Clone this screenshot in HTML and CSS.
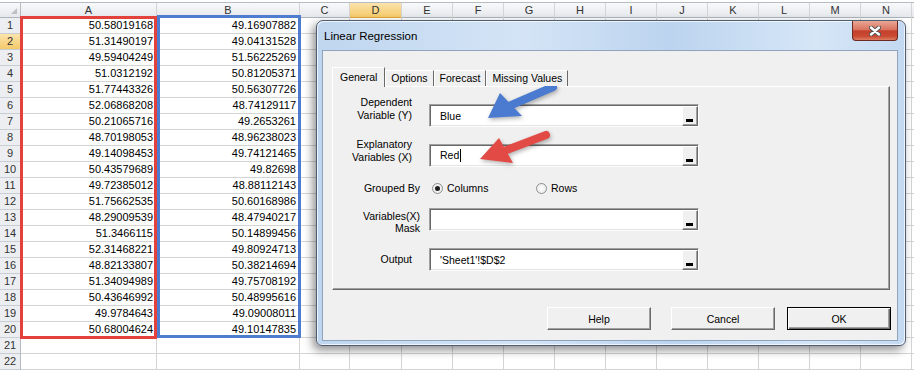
FILE: index.html
```html
<!DOCTYPE html>
<html lang="en">
<head>
    <meta charset="UTF-8">
    <title>Linear Regression</title>
    <link rel="stylesheet" href="styles.css">
</head>
<body>
    <div class="ribbon-edge"></div>
    <div class="sheet">
        <div class="col col-rows">
            <div class="head corner"></div>
            <div class="cell">1</div>
            <div class="cell active">2</div>
            <div class="cell">3</div>
            <div class="cell">4</div>
            <div class="cell">5</div>
            <div class="cell">6</div>
            <div class="cell">7</div>
            <div class="cell">8</div>
            <div class="cell">9</div>
            <div class="cell">10</div>
            <div class="cell">11</div>
            <div class="cell">12</div>
            <div class="cell">13</div>
            <div class="cell">14</div>
            <div class="cell">15</div>
            <div class="cell">16</div>
            <div class="cell">17</div>
            <div class="cell">18</div>
            <div class="cell">19</div>
            <div class="cell">20</div>
            <div class="cell">21</div>
            <div class="cell">22</div>
        </div>
        <div class="col col-a">
            <div class="head">A</div>
            <div class="cell">50.58019168</div>
            <div class="cell">51.31490197</div>
            <div class="cell">49.59404249</div>
            <div class="cell">51.0312192</div>
            <div class="cell">51.77443326</div>
            <div class="cell">52.06868208</div>
            <div class="cell">50.21065716</div>
            <div class="cell">48.70198053</div>
            <div class="cell">49.14098453</div>
            <div class="cell">50.43579689</div>
            <div class="cell">49.72385012</div>
            <div class="cell">51.75662535</div>
            <div class="cell">48.29009539</div>
            <div class="cell">51.3466115</div>
            <div class="cell">52.31468221</div>
            <div class="cell">48.82133807</div>
            <div class="cell">51.34094989</div>
            <div class="cell">50.43646992</div>
            <div class="cell">49.9784643</div>
            <div class="cell">50.68004624</div>
            <div class="cell"></div>
            <div class="cell"></div>
        </div>
        <div class="col col-b">
            <div class="head">B</div>
            <div class="cell">49.16907882</div>
            <div class="cell">49.04131528</div>
            <div class="cell">51.56225269</div>
            <div class="cell">50.81205371</div>
            <div class="cell">50.56307726</div>
            <div class="cell">48.74129117</div>
            <div class="cell">49.2653261</div>
            <div class="cell">48.96238023</div>
            <div class="cell">49.74121465</div>
            <div class="cell">49.82698</div>
            <div class="cell">48.88112143</div>
            <div class="cell">50.60168986</div>
            <div class="cell">48.47940217</div>
            <div class="cell">50.14899456</div>
            <div class="cell">49.80924713</div>
            <div class="cell">50.38214694</div>
            <div class="cell">49.75708192</div>
            <div class="cell">50.48995616</div>
            <div class="cell">49.09008011</div>
            <div class="cell">49.10147835</div>
            <div class="cell"></div>
            <div class="cell"></div>
        </div>
        <div class="col col-c"><div class="head">C</div><div class="blank"></div></div>
        <div class="col col-d"><div class="head active">D</div><div class="blank"></div></div>
        <div class="col col-x"><div class="head">E</div><div class="blank"></div></div>
        <div class="col col-x"><div class="head">F</div><div class="blank"></div></div>
        <div class="col col-x"><div class="head">G</div><div class="blank"></div></div>
        <div class="col col-x"><div class="head">H</div><div class="blank"></div></div>
        <div class="col col-x"><div class="head">I</div><div class="blank"></div></div>
        <div class="col col-x"><div class="head">J</div><div class="blank"></div></div>
        <div class="col col-x"><div class="head">K</div><div class="blank"></div></div>
        <div class="col col-x"><div class="head">L</div><div class="blank"></div></div>
        <div class="col col-x"><div class="head">M</div><div class="blank"></div></div>
        <div class="col col-x"><div class="head">N</div><div class="blank"></div></div>
        <div class="col col-end"><div class="head"></div><div class="blank"></div></div>
    </div>

    <div class="mark mark-red"></div>
    <div class="mark mark-blue"></div>

    <div class="dialog">
        <div class="titlebar">
            <span class="title">Linear Regression</span>
            <button class="close">
                <svg width="12" height="10" viewBox="0 0 12 10">
                    <path d="M2 1.5 L10 8.5 M10 1.5 L2 8.5" stroke="#505050" stroke-width="4.4" stroke-linecap="round"/>
                    <path d="M2 1.5 L10 8.5 M10 1.5 L2 8.5" stroke="#fff" stroke-width="2.4" stroke-linecap="round"/>
                </svg>
            </button>
        </div>
        <div class="client">
            <div class="tabs">
                <div class="tab selected">General</div>
                <div class="tab">Options</div>
                <div class="tab">Forecast</div>
                <div class="tab">Missing Values</div>
            </div>
            <div class="panel">
                <div class="row row-first">
                    <div class="label inset">Dependent<br>Variable (Y)</div>
                    <div class="field"><span class="value">Blue</span><span class="pick"></span></div>
                </div>
                <div class="row row-second">
                    <div class="label inset">Explanatory<br>Variables (X)</div>
                    <div class="field"><span class="value">Red<span class="caret"></span></span><span class="pick"></span></div>
                </div>
                <div class="row row-choice">
                    <div class="label">Grouped By</div>
                    <div class="options">
                        <div class="option wide"><span class="radio on"></span>Columns</div>
                        <div class="option"><span class="radio"></span>Rows</div>
                    </div>
                </div>
                <div class="row row-mask">
                    <div class="label">Variables(X)<br>Mask</div>
                    <div class="field"><span class="value"></span><span class="pick"></span></div>
                </div>
                <div class="row row-output">
                    <div class="label inset">Output</div>
                    <div class="field"><span class="value">'Sheet1'!$D$2</span><span class="pick"></span></div>
                </div>
            </div>
            <div class="buttons">
                <button class="btn">Help</button>
                <button class="btn btn-cancel">Cancel</button>
                <button class="btn btn-default">OK</button>
            </div>
        </div>
    </div>

    <svg class="arrows" width="914" height="370" viewBox="0 0 914 370">
        <line x1="553" y1="87" x2="509" y2="106" stroke="#4b7bd0" stroke-width="8" stroke-linecap="round"/>
        <polygon points="488,118 500,93 522,116" fill="#4b7bd0"/>
        <line x1="546" y1="135" x2="504" y2="151" stroke="#e24a45" stroke-width="8" stroke-linecap="round"/>
        <polygon points="480,159 499,138 513,163" fill="#e24a45"/>
    </svg>
</body>
</html>
```

FILE: styles.css
```css
body {
    margin: 0;
    font-family: "Liberation Sans", Arial, sans-serif;
    background: #fff;
    overflow: hidden;
    height: 370px;
    position: relative;
}

.ribbon-edge {
    height: 2px;
    border-bottom: 1px solid #b6bcc4;
}

/* spreadsheet */

.sheet {
    display: flex;
}

.col {
    flex: none;
    box-sizing: border-box;
    border-right: 1px solid #d4d4d4;
}

.col-rows {
    width: 21px;
    background: #eceef1;
    border-right-color: #b4bac1;
}

.col-a { width: 136px; }
.col-b { width: 143px; }
.col-c { width: 50px; }
.col-d { width: 52px; }
.col-x { width: 51px; }

.col-end {
    flex: 1;
    border-right: none;
}

.head {
    height: 15px;
    box-sizing: border-box;
    border-bottom: 1px solid #aeb5bd;
    background: linear-gradient(#f8f9fa, #e5e8ec);
    text-align: center;
    font-size: 11px;
    line-height: 14px;
    color: #333;
}

.head.active {
    background: linear-gradient(#fbe4ad, #f5c969);
    border-bottom-color: #e2a83b;
}

.corner {
    position: relative;
}

.corner::after {
    content: "";
    position: absolute;
    right: 3px;
    bottom: 3px;
    border-style: solid;
    border-width: 0 0 6px 6px;
    border-color: transparent transparent #bcc1c7 transparent;
}

.cell {
    height: 16px;
    box-sizing: border-box;
    border-bottom: 1px solid #d4d4d4;
    padding-right: 3px;
    text-align: right;
    font-size: 11px;
    line-height: 15px;
    color: #000;
}

.col-rows .cell {
    padding: 0;
    text-align: center;
    border-bottom-color: #c9ced4;
    color: #333;
}

.col-rows .cell.active {
    background: linear-gradient(#fbe4ad, #f5c969);
}

.blank {
    height: 352px;
    background: repeating-linear-gradient(to bottom, transparent 0 15px, #d4d4d4 15px 16px);
}

.mark {
    position: absolute;
    box-sizing: border-box;
    border: 3px solid;
}

.mark-red {
    left: 20px;
    top: 16px;
    width: 137px;
    height: 323px;
    border-color: #e2413c;
}

.mark-blue {
    left: 157px;
    top: 15px;
    width: 144px;
    height: 323px;
    border-color: #4e7ccf;
}

/* dialog window */

.dialog {
    position: absolute;
    left: 316px;
    top: 20px;
    width: 590px;
    height: 326px;
    box-sizing: border-box;
    display: flex;
    flex-direction: column;
    padding: 0 7px 4px 5px;
    border: 1px solid #4f5d70;
    border-radius: 7px 7px 6px 6px;
    background: linear-gradient(to right, #bfd6ef, #d4e4f6 35%, #bcd4ef 60%, #d6e6f7 85%, #c3d9f1);
    box-shadow: -3px 4px 10px rgba(0,0,0,0.45), inset 1px 1px rgba(255,255,255,0.7), inset -1px -1px rgba(255,255,255,0.7);
}

.titlebar {
    flex: none;
    height: 29px;
    display: flex;
    justify-content: space-between;
    align-items: flex-start;
}

.title {
    margin: 9px 0 0 2px;
    font-size: 11.5px;
    line-height: 13px;
    color: #000;
}

.close {
    width: 46px;
    height: 20px;
    box-sizing: border-box;
    padding: 0;
    display: flex;
    align-items: center;
    justify-content: center;
    border: 1px solid #6b2a22;
    border-top: none;
    border-radius: 0 0 4px 4px;
    background: linear-gradient(#e9a795, #d97560 45%, #c4412c 52%, #c94a33 80%, #de7e63);
}

.client {
    flex: 1;
    display: flex;
    flex-direction: column;
    padding: 16px 7px 0 9px;
    border: 1px solid #8fa3bc;
    background: #f0f0f0;
    font-size: 10.5px;
    color: #000;
}

.tabs {
    height: 19px;
    display: flex;
    align-items: flex-end;
    position: relative;
    z-index: 1;
}

.tab {
    height: 16px;
    box-sizing: border-box;
    padding: 0 5px;
    border: 1px solid;
    border-color: #fff #696969 transparent #fff;
    border-bottom: none;
    background: #f0f0f0;
    line-height: 14px;
}

.tab.selected {
    height: 20px;
    margin-bottom: -1px;
    padding: 0 7px;
    line-height: 18px;
}

.panel {
    height: 204px;
    box-sizing: border-box;
    padding-top: 17px;
    border: 1px solid;
    border-color: #fff #696969 #696969 #fff;
    box-shadow: inset -1px -1px #a0a0a0;
}

.row {
    height: 23px;
    display: flex;
    align-items: center;
}

.label {
    flex: none;
    width: 87px;
    box-sizing: border-box;
    margin-right: 9px;
    text-align: right;
    line-height: 12.5px;
}

.label.inset {
    padding-right: 8px;
}

.row-first,
.row-second,
.row-mask {
    align-items: flex-start;
}

.row-first .label {
    margin-top: -8px;
    line-height: 13px;
}

.row-second {
    margin-top: 17px;
}

.row-second .label {
    margin-top: -6px;
}

.row-choice {
    margin-top: 13px;
    height: 16px;
}

.row-mask {
    margin-top: 12px;
}

.row-mask .label {
    margin-top: 2px;
    line-height: 12px;
}

.row-output {
    margin-top: 17px;
}

.field {
    width: 270px;
    height: 23px;
    box-sizing: border-box;
    display: flex;
    justify-content: space-between;
    align-items: center;
    padding-left: 10px;
    border: 1px solid;
    border-color: #a0a0a0 #fff #fff #a0a0a0;
    box-shadow: inset 1px 1px #696969, inset -1px -1px #e3e3e3;
    background: #fff;
}

.caret {
    display: inline-block;
    width: 1px;
    height: 13px;
    margin-left: 1px;
    background: #000;
    vertical-align: middle;
}

.pick {
    align-self: flex-end;
    width: 16px;
    height: 20px;
    box-sizing: border-box;
    position: relative;
    border: 1px solid;
    border-color: #fff #696969 #696969 #fff;
    box-shadow: inset -1px -1px #a0a0a0;
    background: #f0f0f0;
}

.pick::after {
    content: "";
    position: absolute;
    left: 3px;
    bottom: 3px;
    width: 7px;
    height: 3px;
    background: #000;
}

.options {
    display: flex;
    padding-left: 3px;
}

.option {
    display: flex;
    align-items: center;
    gap: 4px;
}

.option.wide {
    width: 104px;
}

.radio {
    width: 11px;
    height: 11px;
    box-sizing: border-box;
    position: relative;
    border: 1px solid #8e8f8f;
    border-radius: 50%;
    background: radial-gradient(#fff, #e4e4e4);
}

.radio.on::after {
    content: "";
    position: absolute;
    left: 2px;
    top: 2px;
    width: 5px;
    height: 5px;
    border-radius: 50%;
    background: #1e1e1e;
}

.buttons {
    display: flex;
    justify-content: flex-end;
    margin: 17px -1px 0 0;
}

.btn {
    width: 104px;
    height: 23px;
    box-sizing: border-box;
    margin-left: 12px;
    padding: 0;
    border: 1px solid;
    border-color: #fff #696969 #696969 #fff;
    box-shadow: inset -1px -1px #a0a0a0;
    background: #f0f0f0;
    font-family: inherit;
    font-size: 10.5px;
    color: #000;
}

.btn-cancel {
    margin-left: 20px;
}

.btn-default {
    border-color: #000;
    box-shadow: inset 1px 1px #fff, inset -1px -1px #696969, inset -2px -2px #a0a0a0;
}

.arrows {
    position: absolute;
    left: 0;
    top: 0;
    pointer-events: none;
    filter: drop-shadow(1px 2px 2px rgba(0,0,0,0.3));
}
```
